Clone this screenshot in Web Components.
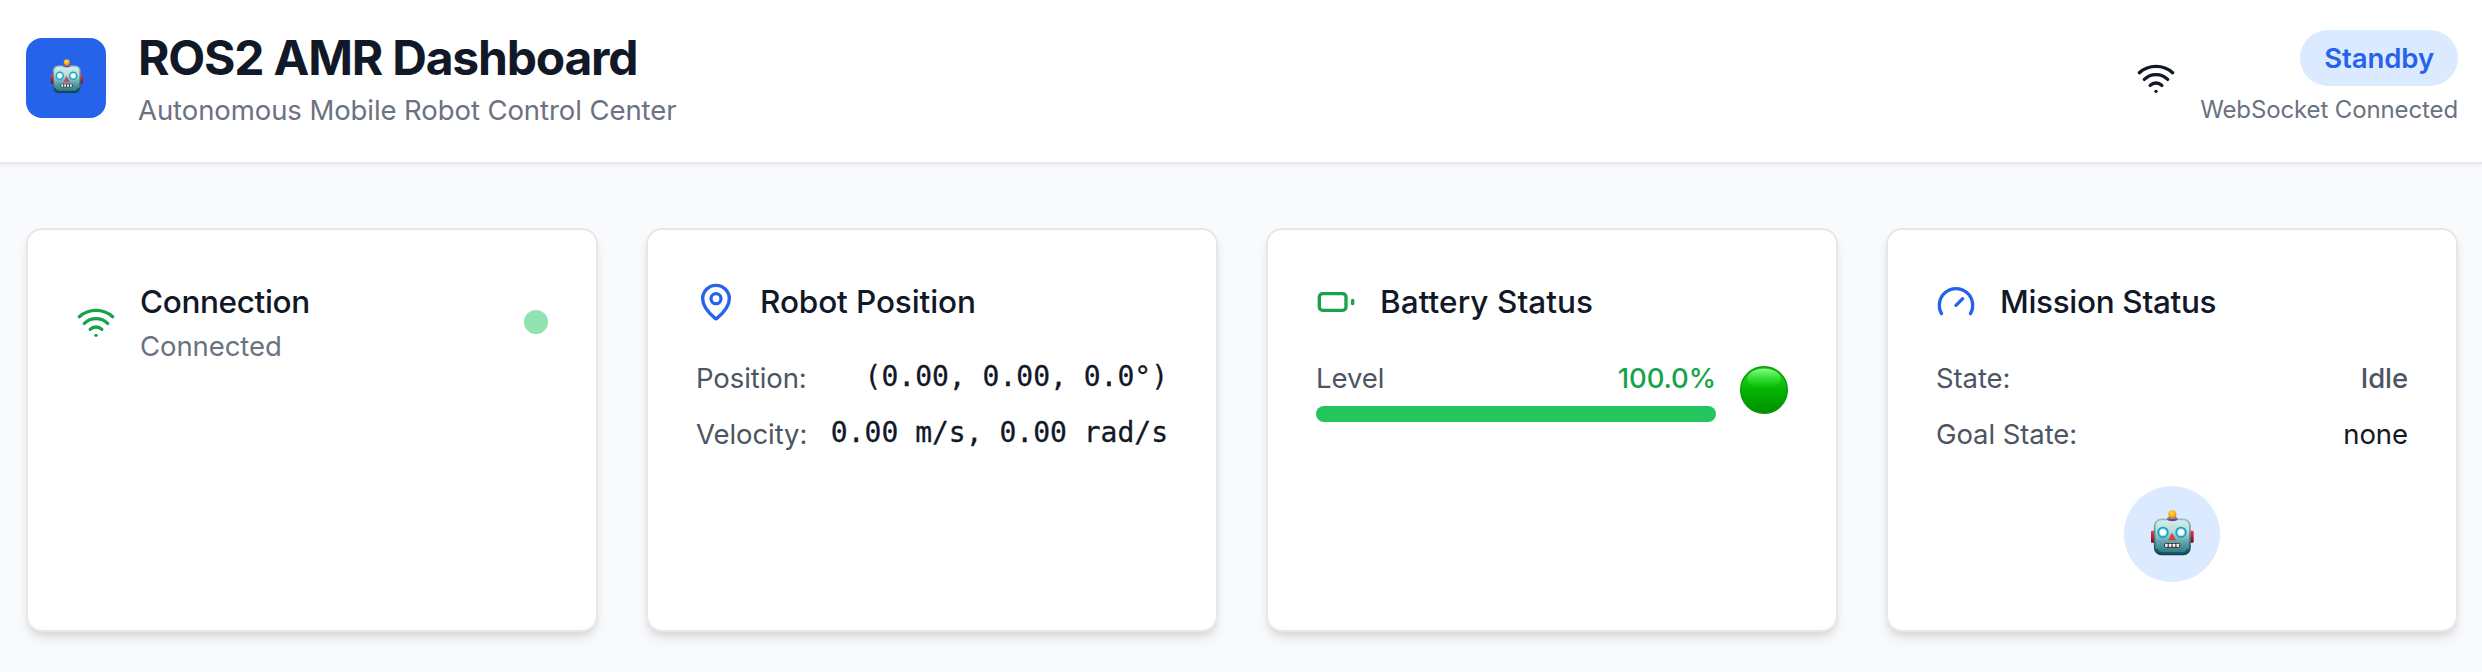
<!DOCTYPE html>
<html lang="en">
<head>
<meta charset="utf-8">
<title>ROS2 AMR Dashboard</title>
<style>
html, body { margin: 0; height: 100%; }
body { background: #f9fafb; font-family: Inter, "Liberation Sans", sans-serif; font-size: 27.5px; letter-spacing: -.08px; line-height: 40px; color: #111827; overflow: hidden; }
</style>
</head>
<body>
<amr-dashboard></amr-dashboard>
<script>
const define = (name, html) => {
  const template = document.createElement('template');
  template.innerHTML = html;
  customElements.define(name, class extends HTMLElement {
    constructor() {
      super();
      this.attachShadow({ mode: 'open' }).append(template.content.cloneNode(true));
    }
  });
};

const icons = {
  wifi: '<path d="M12 20h.01"/><path d="M2 8.82a15 15 0 0 1 20 0"/><path d="M5 12.859a10 10 0 0 1 14 0"/><path d="M8.5 16.429a5 5 0 0 1 7 0"/>',
  pin: '<path d="M20 10c0 4.993-5.539 10.193-7.399 11.799a1 1 0 0 1-1.202 0C9.539 20.193 4 14.993 4 10a8 8 0 0 1 16 0"/><circle cx="12" cy="10" r="3"/>',
  battery: '<rect width="16" height="10" x="2" y="7" rx="2"/><path d="M22 11v2"/>',
  gauge: '<path d="m12 14 4-4"/><path d="M3.34 19a10 10 0 1 1 17.32 0"/>'
};
customElements.define('line-icon', class extends HTMLElement {
  constructor() {
    super();
    this.attachShadow({ mode: 'open' });
  }
  connectedCallback() {
    this.shadowRoot.innerHTML = `<style>:host{display:block;width:40px;height:40px;flex:none}svg{display:block}</style>
      <svg width="40" height="40" viewBox="0 0 24 24" fill="none" stroke="currentColor" stroke-width="2" stroke-linecap="round" stroke-linejoin="round">${icons[this.getAttribute('name')]}</svg>`;
  }
});

define('robot-face', `
<style>:host{display:block;width:var(--robot-size,44px)} svg{display:block;width:100%}</style>
<svg viewBox="0 0 132 136">
  <defs>
    <linearGradient id="head" x1="0" y1="0" x2="0" y2="1"><stop offset="0" stop-color="#d3f0ea"/><stop offset=".35" stop-color="#b5dcdc"/><stop offset=".65" stop-color="#5fa3aa"/><stop offset="1" stop-color="#267581"/></linearGradient>
    <linearGradient id="rim" x1="0" y1="0" x2="0" y2="1"><stop offset="0" stop-color="#9fbfb9"/><stop offset=".5" stop-color="#4d8288"/><stop offset="1" stop-color="#0d434d"/></linearGradient>
    <linearGradient id="ear" x1="0" y1="0" x2="0" y2="1"><stop offset="0" stop-color="#e8414c"/><stop offset=".5" stop-color="#b91d30"/><stop offset="1" stop-color="#6e0d1c"/></linearGradient>
    <radialGradient id="bulb" cx=".45" cy=".35" r=".7"><stop offset="0" stop-color="#ffe04d"/><stop offset=".55" stop-color="#ffb01c"/><stop offset="1" stop-color="#ea7a08"/></radialGradient>
  </defs>
  <rect x="3" y="62" width="12" height="36" rx="3" fill="url(#ear)"/>
  <rect x="119" y="62" width="12" height="36" rx="3" fill="url(#ear)"/>
  <path d="M50 27C52 17 82 17 84 27L78 34H56Z" fill="#674b91"/>
  <circle cx="67" cy="13" r="12" fill="url(#bulb)"/>
  <rect x="14" y="28" width="106" height="105" rx="20" fill="url(#head)" stroke="url(#rim)" stroke-width="5"/>
  <path d="M50 27C55 36 79 36 84 27Z" fill="#674b91"/>
  <path d="M20 116Q24 129 37 129H97Q110 129 114 116" fill="none" stroke="#12505b" stroke-width="5"/>
  <g fill="#fff" stroke="#189dbe" stroke-width="6"><circle cx="39" cy="67" r="14"/><circle cx="93" cy="67" r="14"/></g>
  <g fill="none" stroke="#70e2f5" stroke-width="2.5"><circle cx="39" cy="67" r="11"/><circle cx="93" cy="67" r="11"/></g>
  <path d="M66 70 56 90H77Z" fill="#df3d45" stroke="#aa3f48" stroke-width="1.5"/>
  <rect x="42" y="99" width="49" height="14" rx="6" fill="#3b2b31"/>
  <g fill="#f4ece8"><rect x="45" y="101" width="8" height="10" rx="2"/><rect x="56.500" y="101" width="8" height="10" rx="2"/><rect x="68" y="101" width="8" height="10" rx="2"/><rect x="79.500" y="101" width="8" height="10" rx="2"/></g>
</svg>`);

define('green-orb', `
<style>:host{display:block;width:48px;height:48px;flex:none} svg{display:block}</style>
<svg width="48" height="48" viewBox="0 0 48 48">
  <defs>
    <linearGradient id="g" x1="0" y1="0" x2="0" y2="1"><stop offset="0" stop-color="#1fd01f"/><stop offset=".3" stop-color="#13c80e"/><stop offset=".5" stop-color="#05b403"/><stop offset="1" stop-color="#008d00"/></linearGradient>
    <linearGradient id="s" x1="0" y1="0" x2="0" y2="1"><stop offset="0" stop-color="#86ff88"/><stop offset="1" stop-color="#2ae02a" stop-opacity="0"/></linearGradient>
  </defs>
  <circle cx="24" cy="24" r="23.300" fill="url(#g)" stroke="#0a980a" stroke-width="1.400"/>
  <ellipse cx="24" cy="12.500" rx="16.500" ry="9.800" fill="url(#s)"/>
</svg>`);

define('status-badge', `
<style>:host{display:block;box-sizing:border-box;padding:8px 24px;border-radius:28px;background:#dbeafe;color:#2563eb;font-weight:600;white-space:nowrap}</style><slot></slot>`);

define('app-header', `
<style>
:host{display:flex;justify-content:space-between;align-items:center;box-sizing:border-box;height:164px;padding:30px 24px 36px 26px;background:#fff;border-bottom:2px solid #e5e7eb;box-shadow:0 2px 4px rgba(0,0,0,.05)}
.brand{display:flex;align-items:center;gap:32px}
.logo{display:grid;place-items:center;width:80px;height:80px;border-radius:16px;background:#2563eb;--robot-size:33px}
.logo robot-face{transform:translateY(-2px)}
h1{margin:0;font-size:48px;line-height:64px;font-weight:700;letter-spacing:-1.2px}
p{margin:0;color:#6b7280}
.side{display:flex;align-items:center;gap:24px}
.state{display:flex;flex-direction:column;align-items:flex-end;gap:8px}
.socket{font-size:24px;line-height:32px;letter-spacing:-.12px;color:#6b7280}
</style>
<div class="brand"><div class="logo"><robot-face></robot-face></div><div><h1>ROS2 AMR Dashboard</h1><p>Autonomous Mobile Robot Control Center</p></div></div>
<div class="side"><line-icon name="wifi"></line-icon><div class="state"><status-badge>Standby</status-badge><div class="socket">WebSocket Connected</div></div></div>`);

define('status-card', `
<style>
:host{display:block;box-sizing:border-box;padding:48px;background:#fff;border:2px solid #e5e7eb;border-radius:16px;box-shadow:0 8px 12px -2px rgba(0,0,0,.1),0 4px 8px -4px rgba(0,0,0,.1)}
</style><slot></slot>`);

define('card-title', `
<style>
:host{display:flex;align-items:center;gap:24px;margin-bottom:32px;font-size:31.5px;line-height:48px;font-weight:500}
span{letter-spacing:var(--tracking,-.1px)}
</style><slot name="icon"></slot><span><slot></slot></span>`);

define('data-row', `
<style>
:host{display:flex;justify-content:space-between;height:40px;white-space:nowrap}
:host(:not(:last-of-type)){margin-bottom:16px}
.label{color:#4b5563}
:host([mono]) .value{font-family:"DejaVu Sans Mono","Liberation Mono",monospace;font-size:28px;line-height:38px;letter-spacing:0;-webkit-text-stroke:.3px currentColor}
:host([muted]) .value{color:#4b5563;font-weight:500}
</style><span class="label"><slot name="label"></slot></span><span class="value"><slot></slot></span>`);

define('connection-status', `
<style>
:host{display:flex;align-items:center;gap:24px}
line-icon{color:#16a34a}
.text{flex:1}
.name{font-size:31.5px;line-height:48px;font-weight:500;letter-spacing:-.36px}
.value{color:#6b7280}
.dot{width:24px;height:24px;border-radius:50%;background:#90e2ae}
</style><line-icon name="wifi"></line-icon><div class="text"><div class="name">Connection</div><div class="value">Connected</div></div><div class="dot"></div>`);

define('battery-level', `
<style>
:host{display:flex;align-items:center;gap:24px}
.meter{flex:1}
.labels{display:flex;justify-content:space-between;margin-bottom:8px;color:#4b5563}
.percent{color:#16a34a;font-weight:500}
.bar{height:16px;border-radius:8px;background:#22c55e}
</style><div class="meter"><div class="labels"><span>Level</span><span class="percent">100.0%</span></div><div class="bar"></div></div><green-orb></green-orb>`);

define('robot-avatar', `
<style>
:host{display:grid;place-items:center;width:96px;height:96px;margin:32px auto 0;border-radius:50%;background:#dbeafe}
robot-face{transform:translateY(-1px)}
</style><robot-face></robot-face>`);

define('amr-dashboard', `
<style>
:host{display:block}
main{display:grid;grid-template-columns:repeat(4,minmax(0,1fr));gap:48px;padding:64px 24px 40px 26px}
.blue{color:#2563eb}.green{color:#16a34a}
.battery{--tracking:.06px}.mission{--tracking:-.32px}
</style>
<app-header></app-header>
<main>
  <status-card><connection-status></connection-status></status-card>
  <status-card>
    <card-title><line-icon class="blue" slot="icon" name="pin"></line-icon>Robot Position</card-title>
    <data-row mono><span slot="label">Position:</span>(0.00, 0.00, 0.0°)</data-row>
    <data-row mono><span slot="label">Velocity:</span>0.00 m/s, 0.00 rad/s</data-row>
  </status-card>
  <status-card>
    <card-title class="battery"><line-icon class="green" slot="icon" name="battery"></line-icon>Battery Status</card-title>
    <battery-level></battery-level>
  </status-card>
  <status-card>
    <card-title class="mission"><line-icon class="blue" slot="icon" name="gauge"></line-icon>Mission Status</card-title>
    <data-row muted><span slot="label">State:</span>Idle</data-row>
    <data-row><span slot="label">Goal State:</span>none</data-row>
    <robot-avatar></robot-avatar>
  </status-card>
</main>`);
</script>
</body>
</html>
